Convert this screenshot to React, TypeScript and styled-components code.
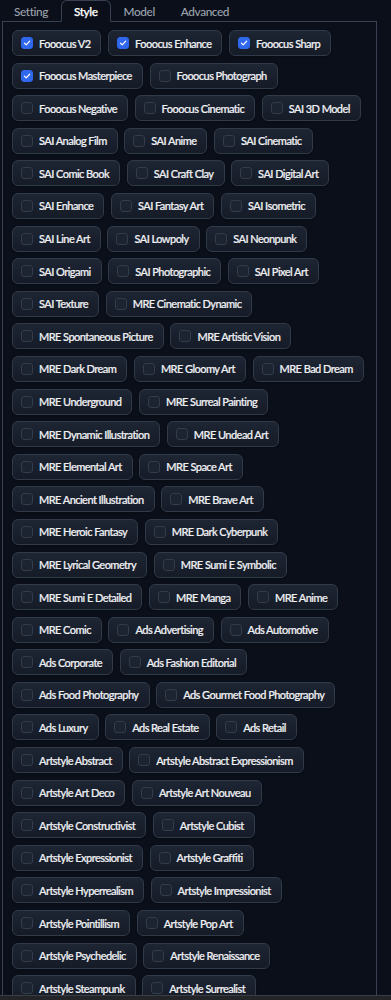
import React from "react";
import styled, { createGlobalStyle } from "styled-components";

const GlobalStyle = createGlobalStyle`
  html, body {
    margin: 0;
    padding: 0;
    background: #0b0f19;
  }
  body {
    font-family: Lato, "Noto Sans", "Liberation Sans", sans-serif;
    color: #e5e7eb;
  }
  * { box-sizing: border-box; }
`;

const Page = styled.div`
  height: 1000px;
  display: flex;
  flex-direction: column;
  overflow: hidden;
  background: #0b0f19;
`;

const TabBar = styled.div`
  display: flex;
  height: 21px;
  padding-left: 1px;
  flex-shrink: 0;
`;

const Tab = styled.div<{ $active?: boolean }>`
  position: relative;
  z-index: 1;
  height: 22px;
  margin-bottom: -1px;
  padding: 0 12px;
  display: flex;
  align-items: center;
  font-size: 11.8px;
  letter-spacing: -0.4px;
  font-weight: 500;
  -webkit-text-stroke: ${(p) => (p.$active ? "0.25px #ffffff" : "0")};
  color: ${(p) => (p.$active ? "#ffffff" : "#9ca3af")};
  background: ${(p) => (p.$active ? "#0b0f19" : "transparent")};
  border: 1px solid ${(p) => (p.$active ? "#374151" : "transparent")};
  border-bottom-color: transparent;
  border-radius: 6px 6px 0 0;
  cursor: pointer;
`;

const Panel = styled.div`
  flex: 1;
  min-height: 0;
  overflow: hidden;
  margin: 0 14px 0 2px;
  padding: 8px 9px;
  border: 1px solid #374151;
  border-bottom: none;
`;

const Options = styled.div`
  display: flex;
  flex-wrap: wrap;
  gap: 6.6px;
`;

const OptionLabel = styled.label`
  display: inline-flex;
  align-items: center;
  gap: 6px;
  height: 26px;
  padding: 0 10px 0 8px;
  border: 1px solid #313a49;
  border-radius: 6px;
  background: linear-gradient(to bottom, #1e2533, #151b27);
  box-shadow: 0 1px 2px rgba(0, 0, 0, 0.25);
  font-size: 11px;
  font-weight: 500;
  letter-spacing: -0.55px;
  -webkit-text-stroke: 0.2px #f0f1f4;
  color: #f0f1f4;
  white-space: nowrap;
  cursor: pointer;
`;

const Box = styled.span<{ $checked?: boolean }>`
  width: 12px;
  height: 12px;
  flex-shrink: 0;
  border-radius: 3px;
  display: flex;
  align-items: center;
  justify-content: center;
  background: ${(p) => (p.$checked ? "#2f68ec" : "#1c2331")};
  border: 1px solid ${(p) => (p.$checked ? "#2f68ec" : "#333c4b")};
`;

const BottomBar = styled.div`
  height: 5px;
  flex-shrink: 0;
  border-top: 1px solid #3a3d44;
  background: #222428;
`;

const styles: string[] = [
  "Fooocus V2",
  "Fooocus Enhance",
  "Fooocus Sharp",
  "Fooocus Masterpiece",
  "Fooocus Photograph",
  "Fooocus Negative",
  "Fooocus Cinematic",
  "SAI 3D Model",
  "SAI Analog Film",
  "SAI Anime",
  "SAI Cinematic",
  "SAI Comic Book",
  "SAI Craft Clay",
  "SAI Digital Art",
  "SAI Enhance",
  "SAI Fantasy Art",
  "SAI Isometric",
  "SAI Line Art",
  "SAI Lowpoly",
  "SAI Neonpunk",
  "SAI Origami",
  "SAI Photographic",
  "SAI Pixel Art",
  "SAI Texture",
  "MRE Cinematic Dynamic",
  "MRE Spontaneous Picture",
  "MRE Artistic Vision",
  "MRE Dark Dream",
  "MRE Gloomy Art",
  "MRE Bad Dream",
  "MRE Underground",
  "MRE Surreal Painting",
  "MRE Dynamic Illustration",
  "MRE Undead Art",
  "MRE Elemental Art",
  "MRE Space Art",
  "MRE Ancient Illustration",
  "MRE Brave Art",
  "MRE Heroic Fantasy",
  "MRE Dark Cyberpunk",
  "MRE Lyrical Geometry",
  "MRE Sumi E Symbolic",
  "MRE Sumi E Detailed",
  "MRE Manga",
  "MRE Anime",
  "MRE Comic",
  "Ads Advertising",
  "Ads Automotive",
  "Ads Corporate",
  "Ads Fashion Editorial",
  "Ads Food Photography",
  "Ads Gourmet Food Photography",
  "Ads Luxury",
  "Ads Real Estate",
  "Ads Retail",
  "Artstyle Abstract",
  "Artstyle Abstract Expressionism",
  "Artstyle Art Deco",
  "Artstyle Art Nouveau",
  "Artstyle Constructivist",
  "Artstyle Cubist",
  "Artstyle Expressionist",
  "Artstyle Graffiti",
  "Artstyle Hyperrealism",
  "Artstyle Impressionist",
  "Artstyle Pointillism",
  "Artstyle Pop Art",
  "Artstyle Psychedelic",
  "Artstyle Renaissance",
  "Artstyle Steampunk",
  "Artstyle Surrealist",
];

const initialChecked = new Set([
  "Fooocus V2",
  "Fooocus Enhance",
  "Fooocus Sharp",
  "Fooocus Masterpiece",
]);

const CheckMark = () => (
  <svg width="8" height="8" viewBox="0 0 10 10" fill="none">
    <path
      d="M1.8 5.2 L4 7.3 L8.3 2.8"
      stroke="#ffffff"
      strokeWidth="1.6"
      strokeLinecap="round"
      strokeLinejoin="round"
    />
  </svg>
);

const tabs = ["Setting", "Style", "Model", "Advanced"];

export default function App() {
  const [active, setActive] = React.useState("Style");
  const [checked, setChecked] = React.useState<Set<string>>(initialChecked);

  const toggle = (name: string) => {
    setChecked((prev) => {
      const next = new Set(prev);
      if (next.has(name)) next.delete(name);
      else next.add(name);
      return next;
    });
  };

  return (
    <Page>
      <GlobalStyle />
      <TabBar>
        {tabs.map((t) => (
          <Tab key={t} $active={t === active} onClick={() => setActive(t)}>
            {t}
          </Tab>
        ))}
      </TabBar>
      <Panel>
        <Options>
          {styles.map((s) => {
            const on = checked.has(s);
            return (
              <OptionLabel key={s} onClick={() => toggle(s)}>
                <Box $checked={on}>{on && <CheckMark />}</Box>
                {s}
              </OptionLabel>
            );
          })}
        </Options>
      </Panel>
      <BottomBar />
    </Page>
  );
}
